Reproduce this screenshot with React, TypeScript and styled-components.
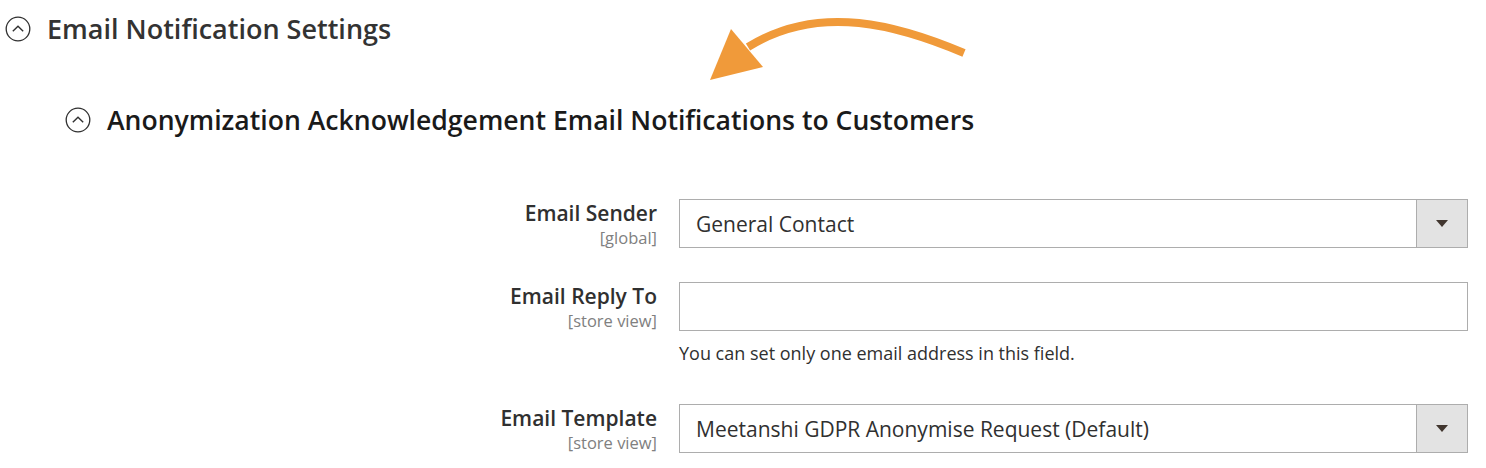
import React from "react";
import styled, { createGlobalStyle } from "styled-components";

const GlobalStyle = createGlobalStyle`
    body {
        margin: 0;
        background: #fff;
        font-family: "Open Sans", "Liberation Sans", sans-serif;
        color: #303030;
    }
`;

const Page = styled.div`
    position: relative;
    width: 1486px;
    height: 468px;
    overflow: hidden;
    padding-top: 13px;
    box-sizing: border-box;
`;

const SectionHead = styled.div<{ $indent: number; $color: string; $gap: number; $size: number }>`
    display: flex;
    align-items: center;
    gap: ${(p) => p.$gap}px;
    padding-left: ${(p) => p.$indent}px;
    margin-bottom: 59px;
    font-size: ${(p) => p.$size}px;
    font-weight: 600;
    color: ${(p) => p.$color};
    line-height: 32px;
`;

const Form = styled.div`
    display: flex;
    flex-direction: column;
    padding-top: 4px;
`;

const Row = styled.div<{ $gap: number }>`
    display: grid;
    grid-template-columns: 657px 789px;
    column-gap: 22px;
    margin-bottom: ${(p) => p.$gap}px;
`;

const LabelCol = styled.div`
    text-align: right;
`;

const Label = styled.div`
    font-size: 21px;
    font-weight: 600;
    color: #303030;
    line-height: 28px;
`;

const Scope = styled.div`
    font-size: 16.5px;
    color: #808080;
    line-height: 22px;
`;

const Field = styled.div`
    display: flex;
    height: 49px;
    box-sizing: border-box;
    border: 1px solid #adadad;
    background: #fff;
`;

const FieldText = styled.div`
    flex: 1;
    display: flex;
    align-items: center;
    padding-left: 16px;
    font-size: 21px;
    color: #303030;
`;

const ArrowBox = styled.div`
    width: 50px;
    display: flex;
    align-items: center;
    justify-content: center;
    background: #e3e3e3;
    border-left: 1px solid #adadad;
`;

const Caret = styled.div`
    width: 0;
    height: 0;
    border-left: 6px solid transparent;
    border-right: 6px solid transparent;
    border-top: 7px solid #41362f;
`;

const Note = styled.div`
    font-size: 18px;
    line-height: 24px;
    color: #303030;
    margin-top: 10px;
`;

const Pointer = styled.svg`
    position: absolute;
    left: 700px;
    top: 10px;
`;

const ToggleIcon = () => (
    <svg width="26" height="26" viewBox="0 0 26 26">
        <circle cx="13" cy="13" r="11.8" fill="none" stroke="#303030" strokeWidth="1.3" />
        <path d="M7.8 15.2 L13 10.2 L18.2 15.2" fill="none" stroke="#303030" strokeWidth="1.4" />
    </svg>
);

const Select = ({ value }: { value: string }) => (
    <Field>
        <FieldText>{value}</FieldText>
        <ArrowBox>
            <Caret />
        </ArrowBox>
    </Field>
);

const App = () => {
    return (
        <Page>
            <GlobalStyle />
            <SectionHead $indent={5} $color="#333" $gap={16} $size={27}>
                <ToggleIcon />
                Email Notification Settings
            </SectionHead>
            <SectionHead $indent={65} $color="#1a1a1a" $gap={16} $size={26.6}>
                <ToggleIcon />
                Anonymization Acknowledgement Email Notifications to Customers
            </SectionHead>
            <Form>
                <Row $gap={33}>
                    <LabelCol>
                        <Label>Email Sender</Label>
                        <Scope>[global]</Scope>
                    </LabelCol>
                    <Select value="General Contact" />
                </Row>
                <Row $gap={39}>
                    <LabelCol>
                        <Label>Email Reply To</Label>
                        <Scope>[store view]</Scope>
                    </LabelCol>
                    <div>
                        <Field />
                        <Note>You can set only one email address in this field.</Note>
                    </div>
                </Row>
                <Row $gap={0}>
                    <LabelCol>
                        <Label>Email Template</Label>
                        <Scope>[store view]</Scope>
                    </LabelCol>
                    <Select value="Meetanshi GDPR Anonymise Request (Default)" />
                </Row>
            </Form>
            <Pointer width="280" height="80" viewBox="700 10 280 80">
                <path
                    d="M964 53 C 900 26, 820 2, 748 47"
                    fill="none"
                    stroke="#f09a3a"
                    strokeWidth="8"
                />
                <polygon points="710,80 731,29 763,67" fill="#f09a3a" />
            </Pointer>
        </Page>
    );
};

export default App;
